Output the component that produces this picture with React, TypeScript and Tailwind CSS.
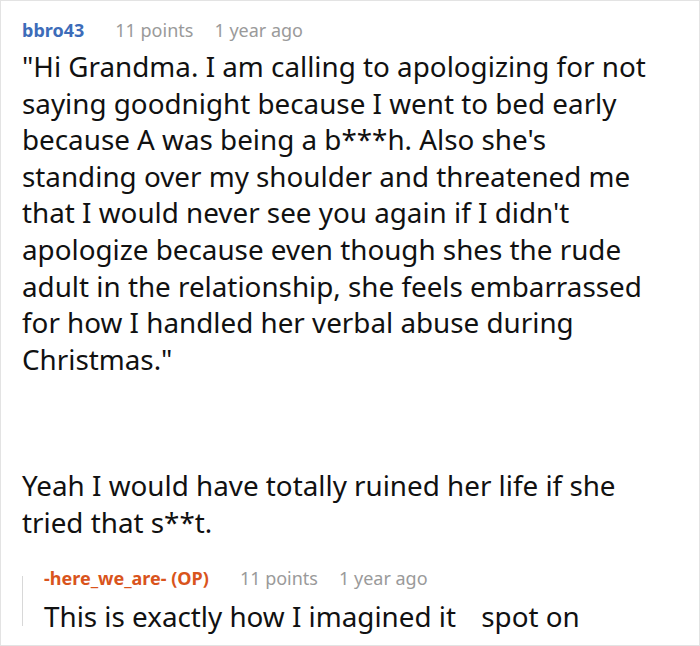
import React from "react";

const font = { fontFamily: '"Noto Sans", "Open Sans", sans-serif' };

const quote = [
  '"Hi Grandma. I am calling to apologizing for not',
  "saying goodnight because I went to bed early",
  "because A was being a b***h. Also she's",
  "standing over my shoulder and threatened me",
  "that I would never see you again if I didn't",
  "apologize because even though shes the rude",
  "adult in the relationship, she feels embarrassed",
  "for how I handled her verbal abuse during",
  'Christmas."',
];

const reply = ["Yeah I would have totally ruined her life if she", "tried that s**t."];

function Meta({ name, color, points, time }: { name: string; color: string; points: string; time: string }) {
  return (
    <div className="flex items-center h-[24px] text-[18px] leading-[24px]">
      <span className={`font-bold ${color}`}>{name}</span>
      <span className="ml-[31px] text-[#9a9a9a]">{points}</span>
      <span className="ml-[21px] text-[#9a9a9a]">{time}</span>
    </div>
  );
}

function Lines({ lines }: { lines: string[] }) {
  return (
    <div>
      {lines.map((line, i) => (
        <div key={i} className="h-[36.6px] leading-[36.6px] whitespace-nowrap">
          {line}
        </div>
      ))}
    </div>
  );
}

export default function App() {
  return (
    <div className="w-[700px] h-[646px] bg-white border border-[#e3e3e3] overflow-hidden" style={font}>
      <div className="pl-[21px] pr-[6px] pt-[17px]">
        <Meta name="bbro43" color="text-[#3d6cb9]" points="11 points" time="1 year ago" />

        <div className="mt-[6px] text-[27.8px] text-[#111]">
          <Lines lines={quote} />
          <div className="mt-[90px]">
            <Lines lines={reply} />
          </div>
        </div>

        <div className="mt-[25px] flex">
          <div className="w-px bg-[#d8d8d8] mt-[10px] mb-[8px]" />
          <div className="pl-[21px]">
            <Meta name="-here_we_are- (OP)" color="text-[#d9541c]" points="11 points" time="1 year ago" />
            <p className="mt-[8px] text-[27.8px] leading-[36.6px] text-[#111] whitespace-nowrap">
              This is exactly how I imagined it<span className="inline-block w-[18px]"> </span> spot on
            </p>
          </div>
        </div>
      </div>
    </div>
  );
}
